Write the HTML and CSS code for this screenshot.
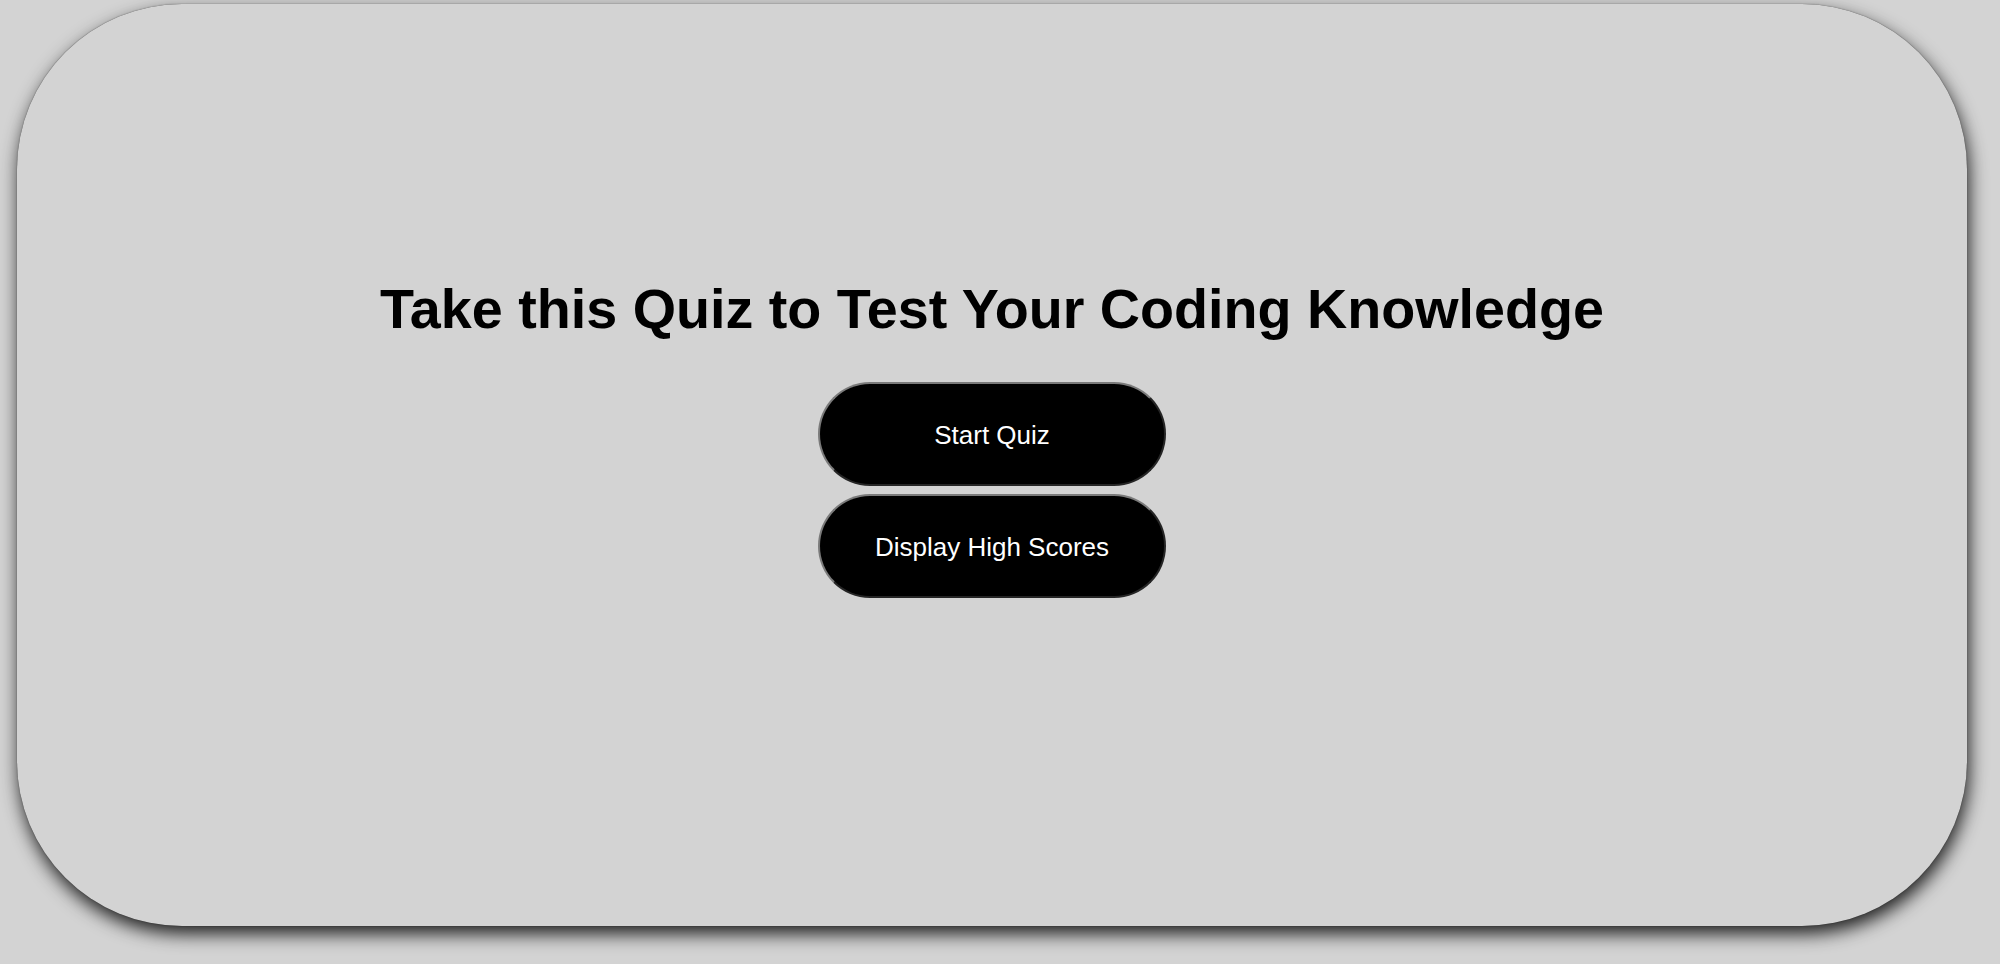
FILE: index.html
```html
<!DOCTYPE html>
<html lang="en">
<head>
<meta charset="utf-8">
<title>Coding Quiz</title>
<link rel="stylesheet" href="styles.css">
</head>
<body>
<main class="card">
  <h1 class="title">Take this Quiz to Test Your Coding Knowledge</h1>
  <div class="actions">
    <button class="pill-btn" type="button">Start Quiz</button>
    <button class="pill-btn" type="button">Display High Scores</button>
  </div>
</main>
</body>
</html>
```

FILE: styles.css
```css
html, body {
  margin: 0;
  padding: 0;
}

body {
  background: #d3d3d3;
  font-family: "Liberation Sans", Arial, Helvetica, sans-serif;
  width: 2000px;
  height: 964px;
  overflow: hidden;
  padding-top: 4px;
  box-sizing: border-box;
}

.card {
  box-sizing: border-box;
  width: 1950px;
  height: 922px;
  margin-left: 17px;
  background: #d3d3d3;
  border-radius: 165px;
  box-shadow: 2px 8px 18px rgba(0, 0, 0, 0.85), 0 0 1px rgba(0, 0, 0, 0.7);
  display: flex;
  flex-direction: column;
  align-items: center;
  padding-top: 273px;
}

.title {
  margin: 0;
  font-size: 55.7px;
  line-height: 64px;
  font-weight: bold;
  color: #000;
  text-align: center;
}

.actions {
  margin-top: 41px;
  display: flex;
  flex-direction: column;
  align-items: center;
  gap: 8px;
}

.pill-btn {
  box-sizing: border-box;
  width: 348px;
  height: 104px;
  border-radius: 52px;
  border: 2px outset #7a7a7a;
  background: #000;
  color: #fff;
  font-family: "Liberation Sans", Arial, Helvetica, sans-serif;
  font-size: 26px;
  padding: 2px 0 0;
  cursor: pointer;
}
```
